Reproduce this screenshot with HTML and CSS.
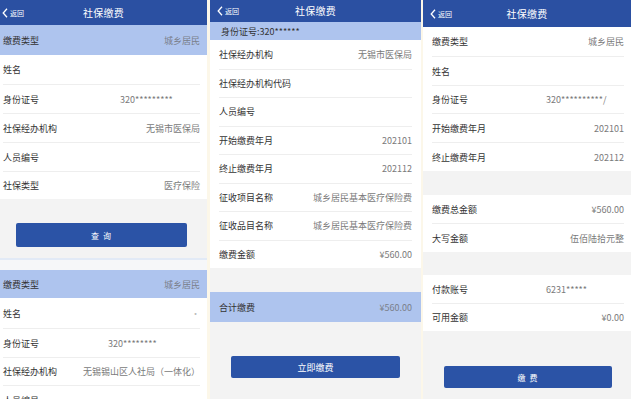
FILE: index.html
```html
<!DOCTYPE html>
<html lang="zh-CN">
<head>
<meta charset="utf-8">
<title>社保缴费</title>
<link rel="stylesheet" href="styles.css">
</head>
<body>
<div class="screens">
  <!-- screen 1 -->
  <section class="screen s1">
    <header class="bar">
      <span class="back"><svg width="6" height="10" viewBox="0 0 6 10"><polyline points="5,0.8 1.2,5 5,9.2" fill="none" stroke="#fff" stroke-width="1.3"/></svg>返回</span>
      <span class="title">社保缴费</span>
      <span></span>
    </header>
    <div class="band bandA"><span class="l">缴费类型</span><span class="v">城乡居民</span></div>
    <div class="list listA">
      <div class="row r29"><span class="l">姓名</span></div>
      <div class="row r29"><span class="l w117">身份证号</span><span class="v at">320*********</span></div>
      <div class="row r29"><span class="l">社保经办机构</span><span class="v">无锡市医保局</span></div>
      <div class="row r29"><span class="l">人员编号</span></div>
      <div class="row r28"><span class="l">社保类型</span><span class="v">医疗保险</span></div>
    </div>
    <div class="foot footA"><button class="btn btnA">查 询</button></div>
    <div class="seam"></div>
    <div class="band bandB"><span class="l">缴费类型</span><span class="v">城乡居民</span></div>
    <div class="list listA">
      <div class="row r30"><span class="l">姓名</span><span class="v dot">·</span></div>
      <div class="row r29"><span class="l w105">身份证号</span><span class="v at">320********</span></div>
      <div class="row r28"><span class="l">社保经办机构</span><span class="v">无锡锡山区人社局（一体化）</span></div>
      <div class="row r29"><span class="l">人员编号</span></div>
    </div>
  </section>

  <!-- screen 2 -->
  <section class="screen s2">
    <header class="bar bar22">
      <span class="back"><svg width="6" height="10" viewBox="0 0 6 10"><polyline points="5,0.8 1.2,5 5,9.2" fill="none" stroke="#fff" stroke-width="1.3"/></svg>返回</span>
      <span class="title">社保缴费</span>
      <span></span>
    </header>
    <div class="band idband"><span class="l">身份证号:320******</span></div>
    <div class="list listB">
      <div class="row r285"><span class="l">社保经办机构</span><span class="v">无锡市医保局</span></div>
      <div class="row r285"><span class="l">社保经办机构代码</span></div>
      <div class="row r285"><span class="l">人员编号</span></div>
      <div class="row r285"><span class="l">开始缴费年月</span><span class="v">202101</span></div>
      <div class="row r285"><span class="l">终止缴费年月</span><span class="v">202112</span></div>
      <div class="row r285"><span class="l">征收项目名称</span><span class="v">城乡居民基本医疗保险费</span></div>
      <div class="row r285"><span class="l">征收品目名称</span><span class="v">城乡居民基本医疗保险费</span></div>
      <div class="row r285"><span class="l">缴费金额</span><span class="v">¥560.00</span></div>
    </div>
    <div class="gap g24"></div>
    <div class="band totband"><span class="l">合计缴费</span><span class="v">¥560.00</span></div>
    <div class="foot footB"><button class="btn btnB">立即缴费</button></div>
  </section>

  <!-- screen 3 -->
  <section class="screen s3">
    <header class="bar bar27">
      <span class="back"><svg width="6" height="10" viewBox="0 0 6 10"><polyline points="5,0.8 1.2,5 5,9.2" fill="none" stroke="#fff" stroke-width="1.3"/></svg>返回</span>
      <span class="title">社保缴费</span>
      <span></span>
    </header>
    <div class="list listC">
      <div class="row r29"><span class="l">缴费类型</span><span class="v">城乡居民</span></div>
      <div class="row r29"><span class="l">姓名</span></div>
      <div class="row r28"><span class="l w114">身份证号</span><span class="v at">320**********/</span></div>
      <div class="row r29"><span class="l">开始缴费年月</span><span class="v">202101</span></div>
      <div class="row r29"><span class="l">终止缴费年月</span><span class="v">202112</span></div>
    </div>
    <div class="gap g24"></div>
    <div class="list listC">
      <div class="row r28"><span class="l">缴费总金额</span><span class="v">¥560.00</span></div>
      <div class="row r29"><span class="l">大写金额</span><span class="v">伍佰陆拾元整</span></div>
    </div>
    <div class="gap g23"></div>
    <div class="list listC">
      <div class="row r28"><span class="l w114">付款账号</span><span class="v at">6231*****</span></div>
      <div class="row r28"><span class="l">可用金额</span><span class="v">¥0.00</span></div>
    </div>
    <div class="foot footC"><button class="btn btnC">缴 费</button></div>
  </section>
</div>
</body>
</html>
```

FILE: styles.css
```css
* { box-sizing: border-box; margin: 0; padding: 0; }
html, body { width: 631px; height: 399px; overflow: hidden; }
body {
  background: #fcf7e9;
  font-family: "Noto Sans CJK SC", "Noto Sans", sans-serif;
  font-size: 9px;
  color: #333;
}
.screens {
  display: flex;
  height: 399px;
  background: #fcf7e9;
}
.screen {
  display: flex;
  flex-direction: column;
  height: 399px;
  overflow: hidden;
  background: #f3f3f3;
}
.s1 { width: 207px; }
.s2 { width: 211px; margin-left: 3px; }
.s3 { width: 208px; margin-left: 2px; }

/* header */
.bar {
  flex: none;
  height: 25px;
  background: #2b50a2;
  color: #fff;
  display: grid;
  grid-template-columns: 1fr auto 1fr;
  align-items: center;
}
.bar22 { height: 22px; }
.bar27 { height: 27px; }
.back {
  display: flex;
  align-items: center;
  gap: 2px;
  font-size: 7px;
  line-height: 10px;
  padding-left: 2px;
}
.s2 .back, .s3 .back { padding-left: 7px; }
.back svg { display: block; }
.title { font-size: 10px; line-height: 12px; letter-spacing: 0.2px; }

/* highlighted band */
.band {
  flex: none;
  display: flex;
  align-items: center;
  justify-content: space-between;
  background: #aec4ee;
  padding: 0 7px 0 3px;
}
.bandA { height: 30px; }
.bandB { height: 28px; }
.idband { height: 18px; padding-left: 11px; }
.idband .l { color: #333; }
.totband { height: 30px; padding: 0 9px; }
.band .v { color: #7a7f8a; }

/* lists */
.list { flex: none; background: #fff; }
.listA { padding: 0 7px 0 3px; }
.listB { padding: 0 9px; }
.listC { padding: 0 7px 0 9px; }
.row {
  display: flex;
  align-items: center;
  justify-content: space-between;
  white-space: nowrap;
}
.row + .row { border-top: 1px solid #eeeeee; }
.r28 { height: 28px; }
.r29 { height: 29px; }
.r30 { height: 30px; }
.r285 { height: 28.5px; }
.l { color: #333; }
.v { color: #7a7a7a; }
.w117 { flex: 0 0 117px; }
.w105 { flex: 0 0 105px; }
.w114 { flex: 0 0 114px; }
.at { margin-right: auto; }
.dot { color: #bbb; }

/* gray gaps */
.gap { flex: none; }
.g24 { height: 24px; }
.g23 { height: 23px; }

/* foot with buttons */
.foot { flex: none; }
.footA { height: 59px; padding: 24px 0 0 16px; }
.footB { padding: 34px 0 0 21px; }
.footC { padding: 35px 0 0 21px; }
.btn {
  display: block;
  border: none;
  border-radius: 2px;
  background: #2b53a6;
  color: #fff;
  font-family: "Noto Sans CJK SC", "Noto Sans", sans-serif;
  font-size: 8px;
  letter-spacing: 1px;
}
.btnA { width: 171px; height: 24px; }
.btnB { width: 169px; height: 22px; font-size: 9px; letter-spacing: 0; }
.btnC { width: 168px; height: 22px; }

.seam {
  flex: none;
  height: 12px;
  background: #f6f7f9;
  border-top: 2px solid #e2eaf6;
}
```
